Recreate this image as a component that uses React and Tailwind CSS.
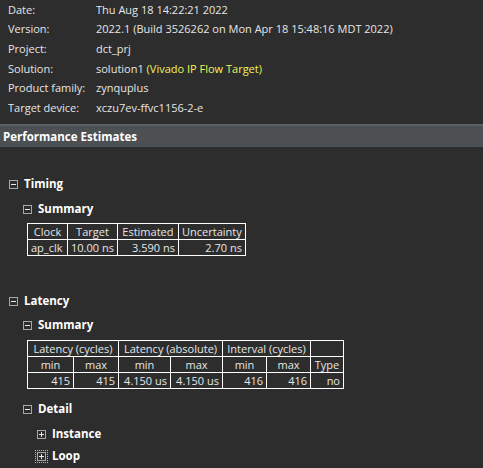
import React from "react";

const font = { fontFamily: '"Open Sans", "Noto Sans", sans-serif' };

function Box({ plus, focus }) {
  return (
    <span
      className={
        "inline-flex items-center justify-center w-[11px] h-[11px] " +
        (focus ? "outline-1 outline-dotted outline-[#bbbbbb]" : "")
      }
    >
      <svg width="9" height="9" viewBox="0 0 9 9">
        <rect x="0.5" y="0.5" width="8" height="8" fill="none" stroke="#a8a8a8" />
        <line x1="2" y1="4.5" x2="7" y2="4.5" stroke="#e8e8e8" />
        {plus && <line x1="4.5" y1="2" x2="4.5" y2="7" stroke="#e8e8e8" />}
      </svg>
    </span>
  );
}

function Node({ label, indent, plus, focus, className = "" }) {
  return (
    <div className={"flex items-center gap-[5px] h-[16px] " + className} style={{ paddingLeft: indent }}>
      <Box plus={plus} focus={focus} />
      <span className="font-bold text-[11.5px] text-white whitespace-nowrap">{label}</span>
    </div>
  );
}

const info = [
  ["Date:", "Thu Aug 18 14:22:21 2022"],
  ["Version:", "2022.1 (Build 3526262 on Mon Apr 18 15:48:16 MDT 2022)"],
  ["Project:", "dct_prj"],
  ["Solution:", "solution1"],
  ["Product family:", "zynquplus"],
  ["Target device:", "xczu7ev-ffvc1156-2-e"],
];

const td = "border border-white px-[3px] h-[16px] leading-[14px] whitespace-nowrap";

export default function App() {
  return (
    <div className="w-[483px] h-[468px] overflow-hidden bg-[#2d2d2d] text-[#e6e6e6] text-[11px]" style={font}>
      {/* header info */}
      <div className="pl-[8px] h-[124px]">
        {info.map(([k, v]) => (
          <div key={k} className="flex h-[19.7px] items-center whitespace-nowrap">
            <span className="w-[88px]">{k}</span>
            <span>
              {v}
              {k === "Solution:" && <span className="text-[#f2f25a]"> (Vivado IP Flow Target)</span>}
            </span>
          </div>
        ))}
      </div>

      <div className="border-t-2 border-[#5c5e60] bg-[#4d5053] h-[23px] flex items-center pl-[3px] font-bold text-white text-[11.5px]">
        Performance Estimates
      </div>

      <div className="pt-[29px]">
        <Node label="Timing" indent={8} />
        <Node label="Summary" indent={22} className="mt-[9px]" />
        <div className="pl-[27px] mt-[6px]">
          <table className="border-collapse">
            <tbody>
              <tr className="text-center">
                <td className={td + " w-[40px]"}>Clock</td>
                <td className={td + " w-[49px]"}>Target</td>
                <td className={td + " w-[61px]"}>Estimated</td>
                <td className={td + " w-[67px]"}>Uncertainty</td>
              </tr>
              <tr className="text-right">
                <td className={td + " text-left"}>ap_clk</td>
                <td className={td}>10.00 ns</td>
                <td className={td}>3.590 ns</td>
                <td className={td}>2.70 ns</td>
              </tr>
            </tbody>
          </table>
        </div>

        <Node label="Latency" indent={8} className="mt-[37px]" />
        <Node label="Summary" indent={22} className="mt-[8px]" />
        <div className="pl-[27px] mt-[7px]">
          <table className="border-collapse">
            <tbody>
              <tr className="text-center">
                <td className={td} colSpan={2}>Latency (cycles)</td>
                <td className={td} colSpan={2}>Latency (absolute)</td>
                <td className={td} colSpan={2}>Interval (cycles)</td>
                <td className={td}></td>
              </tr>
              <tr className="text-center">
                <td className={td + " w-[46px]"}>min</td>
                <td className={td + " w-[45px]"}>max</td>
                <td className={td + " w-[52px]"}>min</td>
                <td className={td + " w-[52px]"}>max</td>
                <td className={td + " w-[44px]"}>min</td>
                <td className={td + " w-[44px]"}>max</td>
                <td className={td + " w-[33px]"}>Type</td>
              </tr>
              <tr className="text-right">
                <td className={td}>415</td>
                <td className={td}>415</td>
                <td className={td}>4.150 us</td>
                <td className={td}>4.150 us</td>
                <td className={td}>416</td>
                <td className={td}>416</td>
                <td className={td}>no</td>
              </tr>
            </tbody>
          </table>
        </div>

        <Node label="Detail" indent={22} className="mt-[12px]" />
        <Node label="Instance" indent={36} plus className="mt-[9px]" />
        <Node label="Loop" indent={36} plus focus className="mt-[6px]" />
      </div>
    </div>
  );
}
